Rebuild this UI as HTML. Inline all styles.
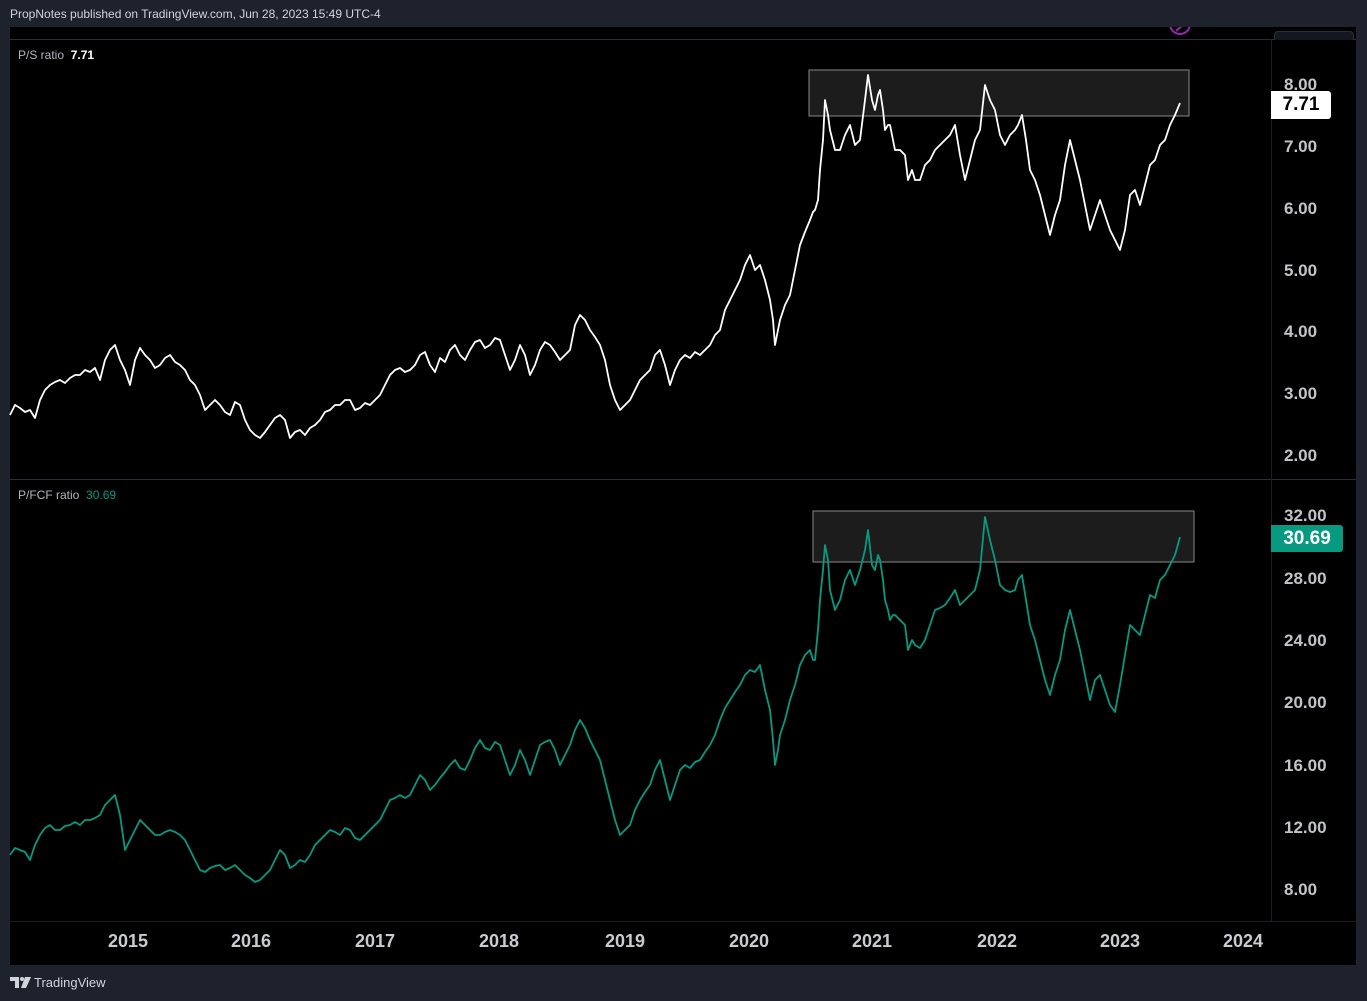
<!DOCTYPE html>
<html><head><meta charset="utf-8"><style>
body{margin:0;width:1367px;height:1001px;background:#1e222d;overflow:hidden;font-family:"Liberation Sans",sans-serif;position:relative}
.t{position:absolute;white-space:nowrap}
.ax{position:absolute;font-size:17px;font-weight:bold;color:#c2c4c9;left:1284px}
.yr{position:absolute;top:931px;font-size:18px;font-weight:bold;color:#c9cbd0;transform:translateX(-50%)}
</style></head><body>
<div class="t" style="left:10px;top:7px;font-size:12px;color:#d1d4dc">PropNotes published on TradingView.com, Jun 28, 2023 15:49 UTC-4</div>
<div style="position:absolute;left:10px;top:27px;width:1346px;height:938px;background:#000"></div>
<div style="position:absolute;left:10px;top:39px;width:1346px;height:1px;background:#2a2e39"></div>
<div style="position:absolute;left:10px;top:479px;width:1346px;height:1px;background:#2a2e39"></div>
<div style="position:absolute;left:10px;top:921px;width:1346px;height:1px;background:#1a1d24"></div>
<div style="position:absolute;left:1271px;top:39px;width:1px;height:882px;background:#1a1d24"></div>
<div style="position:absolute;left:1274px;top:31px;width:78px;height:8px;border:1px solid #2a2e39;border-bottom:none;border-radius:4px 4px 0 0;background:#131722"></div>
<svg style="position:absolute;left:0;top:0" width="1367" height="1001">
<defs><clipPath id="c"><rect x="0" y="27" width="1367" height="20"/></clipPath></defs>
<g clip-path="url(#c)"><circle cx="1180" cy="24" r="10" fill="none" stroke="#9c27b0" stroke-width="2"/>
<line x1="1176" y1="31" x2="1183" y2="25" stroke="#9c27b0" stroke-width="2"/></g>
<rect x="809" y="70" width="380" height="46" fill="#1c1c1c" stroke="#888" stroke-width="1"/>
<rect x="813" y="511" width="381" height="51" fill="#1c1c1c" stroke="#888" stroke-width="1"/>
<polyline fill="none" stroke="#fff" stroke-width="1.8" stroke-linejoin="round" points="10,415 15,405 20,408 25,412 30,410 35,418 40,400 45,390 50,385 55,382 60,380 65,383 70,378 75,375 80,375 85,370 90,372 95,368 100,380 105,360 110,350 115,345 120,360 125,370 130,385 135,360 140,348 145,355 150,360 155,368 160,365 165,358 170,355 175,362 180,365 185,370 190,380 195,385 200,395 205,410 210,405 215,400 220,405 225,412 230,415 235,402 240,405 245,420 250,430 255,435 260,438 265,432 270,425 275,418 280,415 285,420 290,438 295,432 300,430 305,435 310,428 315,425 320,420 325,412 330,410 335,405 340,405 345,400 350,400 355,410 360,408 365,403 370,405 375,400 380,395 385,385 390,375 395,370 400,368 405,372 410,370 415,365 420,355 425,352 430,365 435,372 440,358 445,362 450,350 455,345 460,355 465,360 470,350 475,342 480,340 485,348 490,345 495,338 500,340 505,355 510,370 515,360 520,345 525,355 530,375 535,365 540,350 545,342 550,345 555,352 560,360 565,355 570,350 575,325 580,315 585,320 590,330 595,337 600,345 605,360 610,385 615,400 620,410 625,405 630,400 635,390 640,380 645,375 650,370 655,355 660,350 665,365 670,385 675,370 680,360 685,355 690,358 695,352 700,355 705,350 710,345 715,335 720,330 725,310 730,300 735,290 740,280 745,265 750,255 755,270 760,265 765,280 770,300 773,320 775,345 778,330 780,320 785,305 790,295 795,270 800,245 805,232 810,220 813,212 815,210 818,200 820,170 823,140 825,100 828,115 830,130 835,150 840,150 845,135 850,125 855,145 860,140 865,100 868,75 872,100 875,110 878,95 880,90 883,110 885,130 888,125 890,125 893,140 895,150 900,150 905,155 908,180 912,170 915,180 920,180 925,165 930,160 935,150 940,145 945,140 950,135 955,125 960,155 965,180 970,160 975,140 980,130 985,85 990,100 995,110 1000,135 1005,145 1010,135 1015,130 1018,125 1022,115 1026,140 1030,170 1035,180 1040,195 1045,215 1050,235 1055,215 1060,200 1065,165 1070,140 1075,160 1080,180 1085,205 1090,230 1095,215 1100,200 1105,215 1110,230 1115,240 1120,250 1125,230 1130,195 1135,190 1140,205 1145,185 1150,165 1155,160 1160,145 1165,140 1170,125 1175,115 1180,103"/>
<polyline fill="none" stroke="#089981" stroke-width="1.8" stroke-linejoin="round" points="10,855 15,848 20,850 25,852 30,860 35,845 40,835 45,828 50,825 55,830 60,830 65,826 70,825 75,822 80,825 85,820 90,820 95,818 100,815 105,805 110,800 115,795 120,815 125,850 130,840 135,830 140,820 145,825 150,830 155,835 160,835 165,832 170,830 175,832 180,835 185,840 190,850 195,860 200,870 205,872 210,868 215,866 220,865 225,870 230,868 235,865 240,870 245,875 250,878 255,882 260,880 265,875 270,870 275,860 280,850 285,855 290,868 295,865 300,860 305,862 310,855 315,845 320,840 325,835 330,830 335,832 340,835 345,828 350,830 355,838 360,840 365,835 370,830 375,825 380,820 385,810 390,800 395,798 400,795 405,798 410,795 415,785 420,775 425,780 430,790 435,785 440,778 445,772 450,765 455,760 460,768 465,770 470,760 475,748 480,740 485,748 490,750 495,742 500,745 505,760 510,775 515,765 520,750 525,760 530,775 535,760 540,745 545,742 550,740 555,750 560,765 565,755 570,745 575,730 580,720 585,728 590,740 595,750 600,760 605,780 610,800 615,820 620,835 625,830 630,825 635,810 640,800 645,792 650,785 655,770 660,760 665,780 670,800 675,785 680,770 685,765 690,768 695,762 700,760 705,752 710,745 715,735 720,720 725,708 730,700 735,692 740,685 745,675 750,670 755,672 760,665 765,690 770,710 773,740 775,765 778,750 780,735 785,720 790,700 795,685 800,665 805,655 810,650 813,660 815,660 818,630 820,600 823,570 825,545 828,560 830,590 835,610 840,600 845,580 850,570 855,585 860,570 865,550 868,530 872,565 875,570 878,555 880,560 883,580 885,600 888,610 890,620 893,615 895,615 900,620 905,625 908,650 912,640 915,645 920,648 925,640 930,625 935,610 940,608 945,605 950,598 955,590 960,605 965,600 970,595 975,590 980,570 985,517 990,540 995,560 1000,585 1005,590 1010,592 1015,590 1018,580 1022,575 1026,600 1030,625 1035,640 1040,660 1045,680 1050,695 1055,675 1060,660 1065,630 1070,610 1075,630 1080,650 1085,675 1090,700 1095,680 1100,675 1105,690 1110,705 1115,712 1120,685 1125,655 1130,625 1135,630 1140,635 1145,615 1150,595 1155,598 1160,580 1165,575 1170,565 1175,555 1180,537"/>
</svg>
<div class="t" style="left:18px;top:48px;font-size:12px;color:#b2b5be">P/S ratio &nbsp;<b style="color:#fff">7.71</b></div>
<div class="t" style="left:18px;top:488px;font-size:12px;color:#b2b5be">P/FCF ratio &nbsp;<span style="color:#089981">30.69</span></div>
<div class="ax" style="top:75px">8.00</div>
<div class="ax" style="top:137px">7.00</div>
<div class="ax" style="top:199px">6.00</div>
<div class="ax" style="top:261px">5.00</div>
<div class="ax" style="top:322px">4.00</div>
<div class="ax" style="top:384px">3.00</div>
<div class="ax" style="top:446px">2.00</div>
<div class="ax" style="top:506px">32.00</div>
<div class="ax" style="top:569px">28.00</div>
<div class="ax" style="top:631px">24.00</div>
<div class="ax" style="top:693px">20.00</div>
<div class="ax" style="top:756px">16.00</div>
<div class="ax" style="top:818px">12.00</div>
<div class="ax" style="top:880px">8.00</div>
<div style="position:absolute;left:1271px;top:91px;width:60px;height:28px;background:#fff;border-radius:0 3px 3px 0;color:#000;font-size:19px;font-weight:bold;line-height:28px;text-align:center">7.71</div>
<div style="position:absolute;left:1271px;top:525px;width:72px;height:27px;background:#089981;border-radius:0 3px 3px 0;color:#fff;font-size:19px;font-weight:bold;line-height:27px;text-align:center">30.69</div>
<div class="yr" style="left:128px">2015</div>
<div class="yr" style="left:251px">2016</div>
<div class="yr" style="left:375px">2017</div>
<div class="yr" style="left:499px">2018</div>
<div class="yr" style="left:625px">2019</div>
<div class="yr" style="left:749px">2020</div>
<div class="yr" style="left:872px">2021</div>
<div class="yr" style="left:997px">2022</div>
<div class="yr" style="left:1120px">2023</div>
<div class="yr" style="left:1243px">2024</div>
<svg style="position:absolute;left:10px;top:977px" width="22" height="12"><path d="M0 0h9v11H5V4H0z" fill="#d1d4dc"/><circle cx="12" cy="2" r="2" fill="#d1d4dc"/><path d="M15 0h6l-5 11h-5z" fill="#d1d4dc"/></svg>
<div class="t" style="left:34px;top:975px;font-size:13px;color:#d1d4dc">TradingView</div>
</body></html>
